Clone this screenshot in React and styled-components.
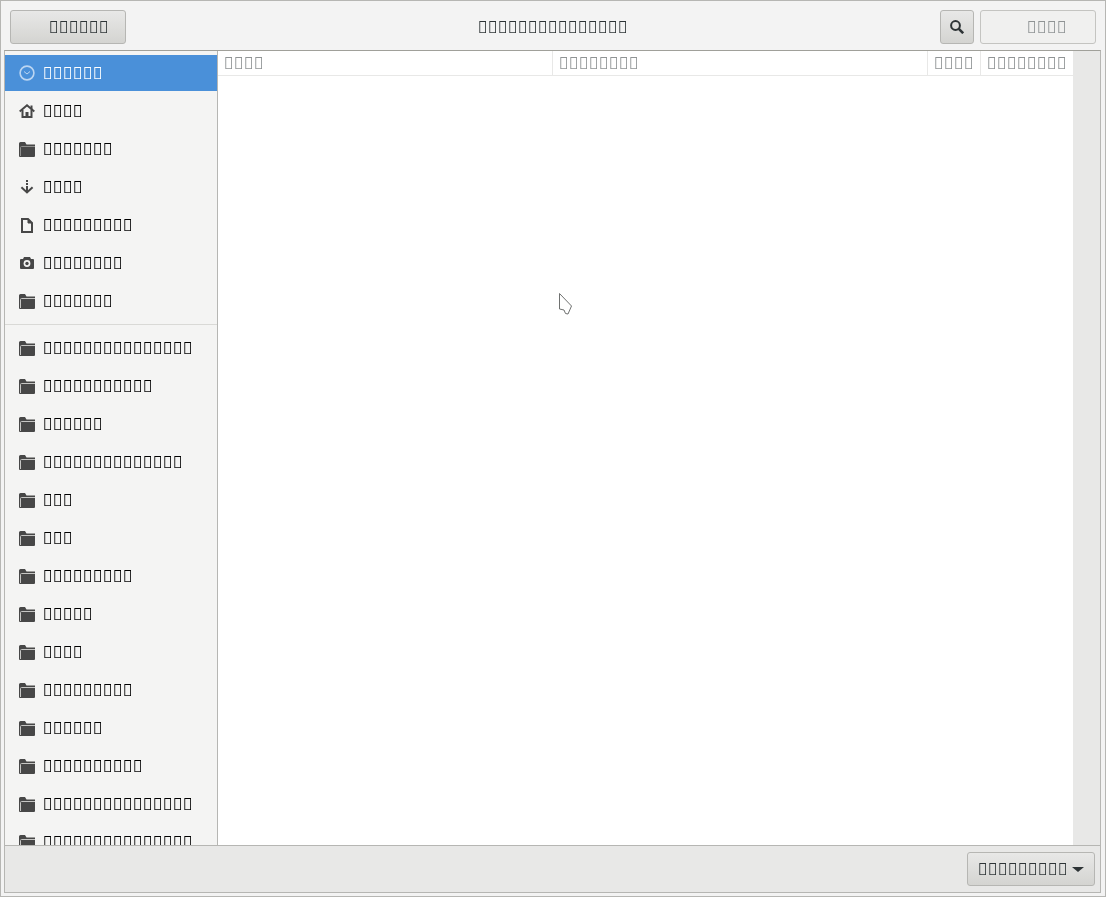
import React from "react";
import styled, { createGlobalStyle } from "styled-components";

const T = (n) => "\uFFFE".repeat(n);

const Global = createGlobalStyle`
  html, body { margin: 0; padding: 0; height: 100%; background: #e8e8e7; overflow: hidden; }
  #root { height: 100%; }
`;

const Win = styled.div`
  width: 1106px; height: 897px; box-sizing: border-box;
  border: 1px solid #b6b6b3; background: #f3f3f3;
  display: flex; flex-direction: column; will-change: transform;
  font-family: "Noto Sans", sans-serif; font-size: 16.67px; line-height: 18px;
`;
const Header = styled.header`
  height: 49px; flex: none; box-sizing: border-box; padding: 9px 9px 6px 9px;
  display: flex; align-items: stretch; position: relative; color: #2e3436;
`;
const Title = styled.div`
  position: absolute; left: 0; right: 0; top: 17px; text-align: center; white-space: nowrap;
`;
const Button = styled.button`
  box-sizing: border-box; height: 34px; padding: 0; margin: 0;
  font: inherit; color: ${(p) => (p.disabled ? "#8f9394" : "#2e3436")};
  border: 1px solid ${(p) => (p.disabled ? "#c4c4c1" : "#b6b6b3")}; border-radius: 3px;
  background: ${(p) => (p.disabled ? "#f0f0ef" : "linear-gradient(#e8e8e7, #d4d4d1)")};
  display: flex; align-items: center; justify-content: center; flex: none;
`;
const BackButton = styled(Button)` width: 116px; justify-content: flex-start; padding-left: 38px; `;
const Spacer = styled.div` flex: 1; `;
const SearchButton = styled(Button)` width: 34px; margin-right: 6px; `;
const OpenButton = styled(Button)` width: 116px; justify-content: flex-start; padding-left: 46px; `;

const Frame = styled.div`
  flex: 1; min-height: 0; margin: 0 4px 3px 3px; border: 1px solid #b6b6b3; border-top-color: #a0a09a;
  display: flex; flex-direction: column; background: #e8e8e7;
`;
const Body = styled.div` flex: 1; min-height: 0; display: flex; `;
const Sidebar = styled.nav`
  width: 213px; flex: none; box-sizing: border-box; background: #f4f4f3;
  border-right: 1px solid #b6b6b3; padding-top: 4px; overflow: hidden;
`;
const Row = styled.div`
  height: 36px; margin-bottom: 2px; display: flex; align-items: center; padding-left: 13px;
  background: ${(p) => (p.$active ? "#4a90d9" : "transparent")};
  color: ${(p) => (p.$active ? "#ffffff" : "#000000")};
  white-space: nowrap;
`;
const IconBox = styled.span`
  width: 18px; height: 18px; margin-right: 7px; flex: none; display: flex; align-items: center; justify-content: center;
`;
const Separator = styled.div` height: 1px; background: #d9d9d6; margin: 5px 0; `;
const Main = styled.main` flex: 1; min-width: 0; display: flex; background: #e8e8e7; `;
const TableArea = styled.div` width: 855px; flex: none; background: #fff; position: relative; `;
const TableHead = styled.div`
  height: 25px; box-sizing: border-box; border-bottom: 1px solid #e8e8e7; display: flex; color: #8f9394;
`;
const HeadCell = styled.div`
  width: ${(p) => p.$w}px; box-sizing: border-box; padding: 3px 0 0 6px; flex: none;
  border-right: ${(p) => (p.$last ? "none" : "1px solid #e8e8e7")}; white-space: nowrap;
`;
const Footer = styled.footer`
  height: 47px; flex: none; box-sizing: border-box; border-top: 1px solid #b6b6b3; background: #e8e8e7;
  display: flex; justify-content: flex-end; padding: 6px 5px 0 0;
`;
const FilterButton = styled(Button)` width: 128px; justify-content: flex-start; padding-left: 10px; `;
const Caret = styled.span`
  width: 0; height: 0; margin-left: 4px;
  border-left: 6.5px solid transparent; border-right: 6.5px solid transparent; border-top: 5px solid #2e3436;
`;
const Pointer = styled.svg` position: absolute; left: 340px; top: 241px; `;
const OffsetSvg = styled.svg` margin-top: 1px; `;

const C = "#474747";
const Folder = ({ edge = "#c6c6c4" }) => (
  <OffsetSvg width="16" height="15" viewBox="0 0 16 15">
    <path d="M0 1.5q0-1.5 1.5-1.5H6l1.5 2.5H16V14q0 1-1 1H1q-1 0-1-1z" fill={C} />
    <path d="M1.5 14V5.5q0-1 1-1H16" fill="none" stroke={edge} strokeWidth="1" />
  </OffsetSvg>
);
const Clock = () => (
  <svg width="16" height="16" viewBox="0 0 16 16" fill="none" stroke="#bcd6f2" strokeWidth="1.6">
    <circle cx="8" cy="8" r="6.9" />
    <path d="M5 6.5l3 2.5 3-2.5" strokeWidth="1" />
  </svg>
);
const Home = () => (
  <svg width="16" height="14" viewBox="0 0 16 14" fill="none" stroke={C}>
    <path d="M.7 7.5L8 1.3l7.3 6.2" strokeWidth="2" />
    <path d="M3.5 6v7h9V6" strokeWidth="2" />
    <path d="M11.5 1.5h2v4h-2z" fill={C} stroke="none" />
    <path d="M6.5 8h3v5h-3z" fill={C} stroke="none" />
  </svg>
);
const Download = () => (
  <svg width="14" height="14" viewBox="0 0 14 14" fill={C}>
    <rect x="6" y="0" width="2" height="2" />
    <rect x="6" y="3" width="2" height="2" />
    <rect x="6" y="6" width="2" height="5" />
    <path d="M1.4 7.2L7 12.4l5.6-5.2" fill="none" stroke={C} strokeWidth="2" />
  </svg>
);
const Doc = () => (
  <OffsetSvg width="12" height="15" viewBox="0 0 12 15" fill="none" stroke={C} strokeWidth="2">
    <path d="M1 1h6l4 4v9H1z" />
    <path d="M7 1v4h4z" fill={C} strokeWidth="1" />
  </OffsetSvg>
);
const Camera = () => (
  <svg width="14" height="12" viewBox="0 0 14 12">
    <path d="M1 2h2l1-2h6l1 2h2q1 0 1 1v8q0 1-1 1H1q-1 0-1-1V3q0-1 1-1z" fill={C} />
    <circle cx="7" cy="6.5" r="3.4" fill="#f4f4f3" />
    <circle cx="7" cy="6.5" r="1.7" fill={C} />
  </svg>
);
const Search = () => (
  <svg width="14" height="14" viewBox="0 0 14 14" fill="none" stroke="#2e3436">
    <circle cx="5.5" cy="5.5" r="4.4" strokeWidth="2" />
    <path d="M8.8 8.8l4.4 4.4" strokeWidth="2.6" />
  </svg>
);

const places = [
  [<Home />, 4], [<Folder edge="#8e8e8c" />, 7], [<Download />, 4], [<Doc />, 9], [<Camera />, 8], [<Folder />, 7],
];
const bookmarks = [15, 11, 6, 14, 3, 3, 9, 5, 4, 9, 6, 10, 15, 15];

export default function App() {
  return (
    <Win>
      <Global />
      <Header>
        <BackButton>{T(6)}</BackButton>
        <Title>{T(15)}</Title>
        <Spacer />
        <SearchButton><Search /></SearchButton>
        <OpenButton disabled>{T(4)}</OpenButton>
      </Header>
      <Frame>
        <Body>
          <Sidebar>
            <Row $active><IconBox><Clock /></IconBox>{T(6)}</Row>
            {places.map(([icon, n], i) => (
              <Row key={i}><IconBox>{icon}</IconBox>{T(n)}</Row>
            ))}
            <Separator />
            {bookmarks.map((n, i) => (
              <Row key={i}><IconBox><Folder /></IconBox>{T(n)}</Row>
            ))}
          </Sidebar>
          <Main>
            <TableArea>
              <TableHead>
                <HeadCell $w={335}>{T(4)}</HeadCell>
                <HeadCell $w={375}>{T(8)}</HeadCell>
                <HeadCell $w={53}>{T(4)}</HeadCell>
                <HeadCell $w={92} $last>{T(8)}</HeadCell>
              </TableHead>
              <Pointer width="15" height="24" viewBox="0 0 15 24">
                <path d="M1.5 1.5L13.5 14l-3.5 8-2.5-.5L6 18 1.5 17z" fill="#fff" stroke="#6f7170" strokeWidth="1" />
              </Pointer>
            </TableArea>
          </Main>
        </Body>
        <Footer>
          <FilterButton>{T(9)}<Caret /></FilterButton>
        </Footer>
      </Frame>
    </Win>
  );
}
